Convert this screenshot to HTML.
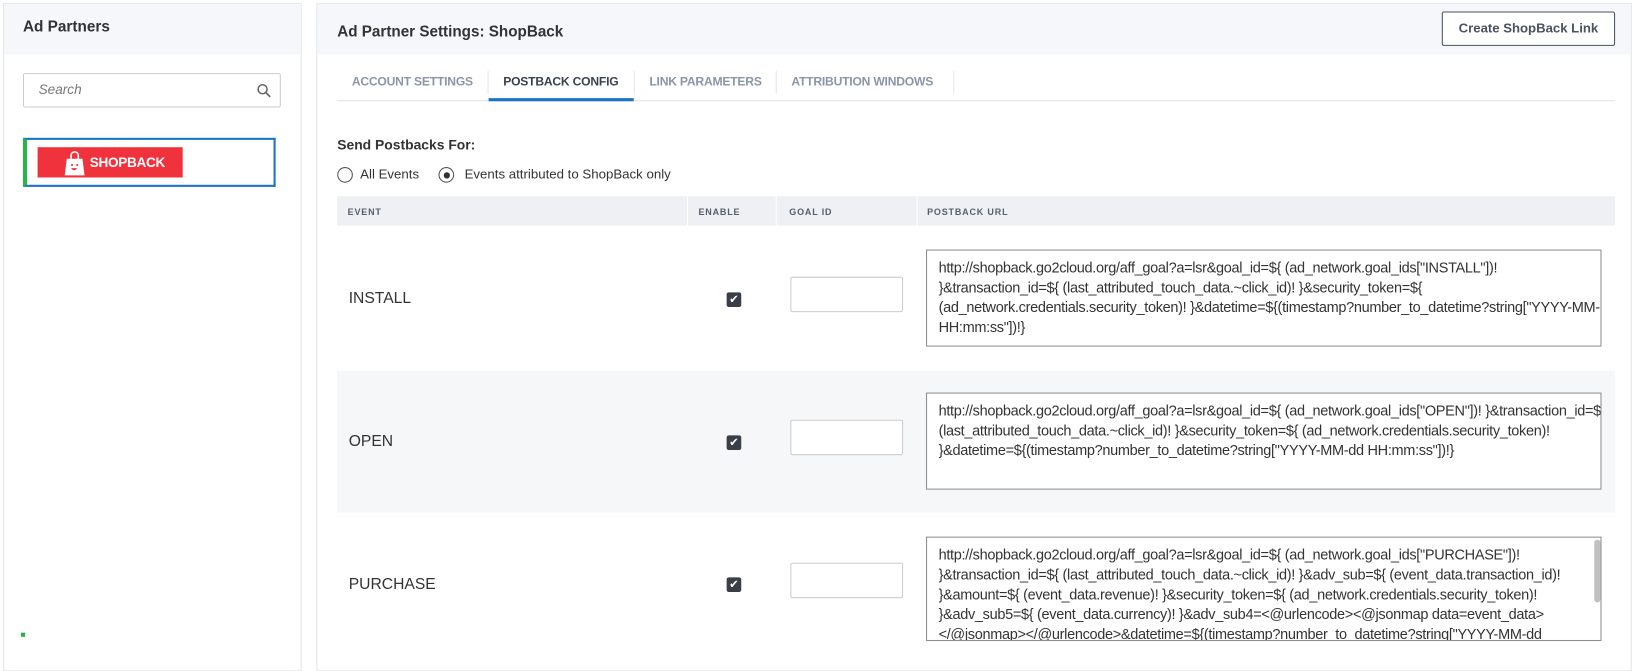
<!DOCTYPE html>
<html><head><meta charset="utf-8"><style>
*{box-sizing:border-box;margin:0;padding:0}
body{width:1637px;height:638px;overflow:hidden;background:#fff;font-family:"Liberation Sans",sans-serif;color:#333;position:relative}
#w{position:absolute;left:0;top:0;width:1568px;height:611px;transform:scale(1.04401);transform-origin:0 0}
.a{position:absolute}
.panel{border:1px solid #e1e5ec;background:#fff}
.hdr{background:#f6f7fb}
.tab{position:absolute;top:72px;font-size:11.6px;font-weight:bold;color:#8a96a8;letter-spacing:-0.2px}
.sep{position:absolute;top:68px;width:1px;height:22px;background:#e3e6ea}
.th{position:absolute;top:198px;font-size:8.6px;font-weight:bold;color:#555e6b;letter-spacing:0.8px}
.ta{position:absolute;left:887px;width:647px;border:1px solid #8d8d8d;background:#fff;padding:7px 11px;font-size:13.9px;line-height:19px;color:#333;white-space:nowrap;overflow:hidden;letter-spacing:-0.3px}
.cb{position:absolute;left:696px;width:14px;height:14px;background:#3a3e47;border-radius:2px;color:#fff;font-size:11px;line-height:14px;text-align:center}
.gi{position:absolute;left:757px;width:108px;height:34px;border:1px solid #ccc;border-radius:2px;background:#fff}
.ev{position:absolute;left:334px;font-size:15px;color:#333}
</style></head><body><div id="w">
<div class="a panel" style="left:3px;top:3px;width:286px;height:640px"></div>
<div class="a hdr" style="left:4px;top:4px;width:284px;height:48px"></div>
<div class="a" style="left:22px;top:18px;font-size:14.7px;font-weight:bold;color:#333">Ad Partners</div>
<div class="a" style="left:22px;top:70px;width:247px;height:33px;border:1px solid #ccc;border-radius:2px"></div>
<div class="a" style="left:37px;top:78px;font-size:13px;font-style:italic;color:#777">Search</div>
<svg class="a" style="left:246px;top:80px" width="14" height="14" viewBox="0 0 14 14"><circle cx="5.5" cy="5.5" r="4.3" fill="none" stroke="#666" stroke-width="1.5"/><path d="M8.7 8.7L12.8 12.8" stroke="#666" stroke-width="1.6"/></svg>
<div class="a" style="left:22px;top:132px;width:242px;height:47px;border:2px solid #1a73c8;border-left:4px solid #2bb24c"></div>
<div class="a" style="left:36px;top:141px;width:139px;height:29px;background:#f0323c"></div>
<svg class="a" style="left:60px;top:143px" width="26" height="26" viewBox="0 0 26 26"><path d="M4 9h15l2 16H2z" fill="#fff"/><path d="M8 9V6a3.5 3.5 0 0 1 7 0v3" fill="none" stroke="#fff" stroke-width="1.5"/><circle cx="9" cy="15" r="1" fill="#f0323c"/><circle cx="14" cy="15" r="1" fill="#f0323c"/><path d="M8 18q3 4 6 0z" fill="#f0323c"/></svg>
<div class="a" style="left:86px;top:148px;font-size:13px;font-weight:bold;color:#fff;letter-spacing:-0.3px">SHOPBACK</div>
<div class="a" style="left:20px;top:606px;width:4px;height:4px;background:#2bb24c"></div>

<div class="a panel" style="left:303px;top:3px;width:1260px;height:640px"></div>
<div class="a hdr" style="left:304px;top:4px;width:1258px;height:48px"></div>
<div class="a" style="left:323px;top:23px;font-size:14.6px;font-weight:bold;color:#333">Ad Partner Settings: ShopBack</div>
<div class="a" style="left:1381px;top:11px;width:166px;height:33px;border:1px solid #4a5260;border-radius:2px;background:#fff;font-size:12.6px;font-weight:bold;color:#4a5260;text-align:center;line-height:31px">Create ShopBack Link</div>

<div class="tab" style="left:337px">ACCOUNT SETTINGS</div>
<div class="sep" style="left:467px"></div>
<div class="tab" style="left:482px;color:#3a4250">POSTBACK CONFIG</div>
<div class="sep" style="left:607px"></div>
<div class="tab" style="left:622px">LINK PARAMETERS</div>
<div class="sep" style="left:743px"></div>
<div class="tab" style="left:758px">ATTRIBUTION WINDOWS</div>
<div class="sep" style="left:913px"></div>
<div class="a" style="left:323px;top:96px;width:1224px;height:1px;background:#dfe3e8"></div>
<div class="a" style="left:468px;top:94px;width:139px;height:3px;background:#1a73c8"></div>

<div class="a" style="left:323px;top:131px;font-size:13.3px;font-weight:bold;color:#333">Send Postbacks For:</div>
<div class="a" style="left:323px;top:160px;width:15px;height:15px;border:1px solid #555;border-radius:50%"></div>
<div class="a" style="left:345px;top:160px;font-size:12.7px">All Events</div>
<div class="a" style="left:420px;top:160px;width:15px;height:15px;border:1px solid #555;border-radius:50%"></div>
<div class="a" style="left:424.5px;top:164.5px;width:6px;height:6px;background:#333;border-radius:50%"></div>
<div class="a" style="left:445px;top:160px;font-size:12.7px">Events attributed to ShopBack only</div>

<div class="a" style="left:323px;top:188px;width:1224px;height:28px;background:#eef0f4"></div>
<div class="a" style="left:658px;top:188px;width:1px;height:28px;background:#fff"></div>
<div class="a" style="left:743px;top:188px;width:1px;height:28px;background:#fff"></div>
<div class="a" style="left:878px;top:188px;width:1px;height:28px;background:#fff"></div>
<div class="th" style="left:333px">EVENT</div>
<div class="th" style="left:669px">ENABLE</div>
<div class="th" style="left:756px">GOAL ID</div>
<div class="th" style="left:888px">POSTBACK URL</div>

<div class="a" style="left:323px;top:355px;width:1224px;height:136px;background:#f6f7f9"></div>

<div class="ev" style="top:277px">INSTALL</div>
<div class="cb" style="top:280px">✔</div>
<div class="gi" style="top:265px"></div>
<div class="ta" style="top:239px;height:93px">http://shopback.go2cloud.org/aff_goal?a=lsr&amp;goal_id=${ (ad_network.goal_ids["INSTALL"])!<br>}&amp;transaction_id=${ (last_attributed_touch_data.~click_id)! }&amp;security_token=${<br>(ad_network.credentials.security_token)! }&amp;datetime=${(timestamp?number_to_datetime?string["YYYY-MM-dd<br>HH:mm:ss"])!}</div>

<div class="ev" style="top:414px">OPEN</div>
<div class="cb" style="top:417px">✔</div>
<div class="gi" style="top:402px"></div>
<div class="ta" style="top:376px;height:93px">http://shopback.go2cloud.org/aff_goal?a=lsr&amp;goal_id=${ (ad_network.goal_ids["OPEN"])! }&amp;transaction_id=${<br>(last_attributed_touch_data.~click_id)! }&amp;security_token=${ (ad_network.credentials.security_token)!<br>}&amp;datetime=${(timestamp?number_to_datetime?string["YYYY-MM-dd HH:mm:ss"])!}</div>

<div class="ev" style="top:551px">PURCHASE</div>
<div class="cb" style="top:553px">✔</div>
<div class="gi" style="top:539px"></div>
<div class="ta" style="top:514px;height:100px">http://shopback.go2cloud.org/aff_goal?a=lsr&amp;goal_id=${ (ad_network.goal_ids["PURCHASE"])!<br>}&amp;transaction_id=${ (last_attributed_touch_data.~click_id)! }&amp;adv_sub=${ (event_data.transaction_id)!<br>}&amp;amount=${ (event_data.revenue)! }&amp;security_token=${ (ad_network.credentials.security_token)!<br>}&amp;adv_sub5=${ (event_data.currency)! }&amp;adv_sub4=&lt;@urlencode&gt;&lt;@jsonmap data=event_data&gt;<br>&lt;/@jsonmap&gt;&lt;/@urlencode&gt;&amp;datetime=${(timestamp?number_to_datetime?string["YYYY-MM-dd</div>
<div class="a" style="left:1527px;top:517px;width:6px;height:60px;background:#c1c1c1;border-radius:3px"></div>
</div></body></html>
